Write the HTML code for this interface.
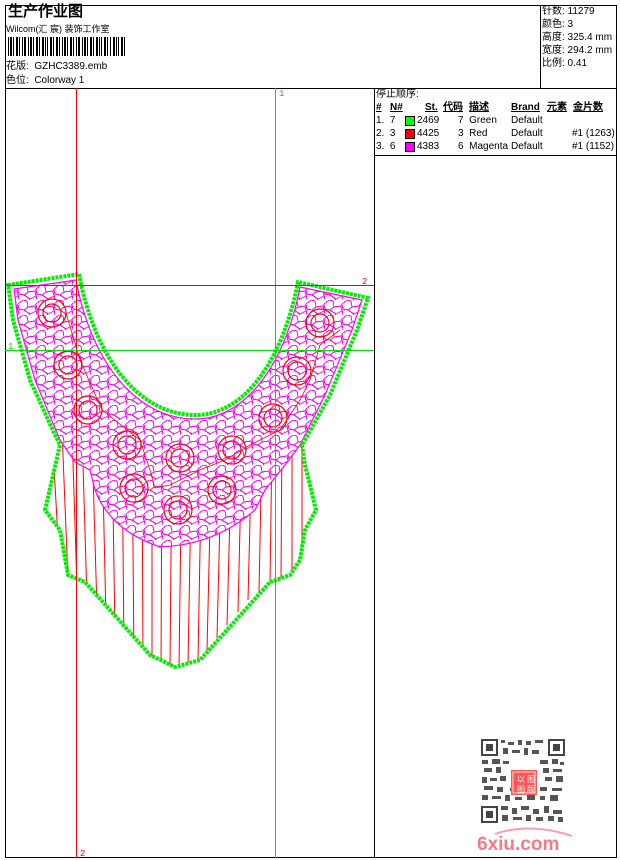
<!DOCTYPE html>
<html><head><meta charset="utf-8"><style>
*{margin:0;padding:0}
body{width:620px;height:860px;background:#fff;position:relative;overflow:hidden;font-family:"Liberation Sans","WenQuanYi Zen Hei",sans-serif;font-size:10px;color:#000}
.a{position:absolute;white-space:nowrap;line-height:12px}
.b{font-weight:bold;text-decoration:underline}
.l{position:absolute}
</style></head><body>
<svg width="620" height="860" style="position:absolute;left:0;top:0" xmlns="http://www.w3.org/2000/svg" shape-rendering="crispEdges">
<defs>
<pattern id="cells" width="18" height="15" patternUnits="userSpaceOnUse">
<path d="M0 4 L5 0 L9 1 L10 7 L6 10 L1 9 Z M10 7 L17 6 L18 11 L12 14 L6 10 M1 9 L0 15 M12 14 L11 15 M5 0 L5 -1 M17 6 L18 4" fill="none" stroke="#f0f" stroke-width="1"/>
</pattern>
<clipPath id="outer"><path d="M8 285 L79 274 C95 360 140 415 195 415 C250 415 285 350 298 282 L368 298 L357 330 L330 395 L302 445 L305 465 L316 510 L305 530 L300 560 L290 575 L270 582 L245 610 L200 660 L175 667 L150 655 L110 610 L85 582 L68 575 L60 530 L45 510 L60 445 L55 435 L30 380 L13 320 Z"/></clipPath>
</defs>
<rect x="5.5" y="5.5" width="611" height="852" fill="none" stroke="#000"/>
<line x1="5" y1="88.5" x2="617" y2="88.5" stroke="#000"/>
<line x1="540.5" y1="5" x2="540.5" y2="88" stroke="#000"/>
<line x1="374.5" y1="88" x2="374.5" y2="858" stroke="#000"/>
<line x1="374" y1="155.5" x2="617" y2="155.5" stroke="#000"/>
<g fill="#000">
<rect x="8" y="37" width="1" height="19"/><rect x="10" y="37" width="2" height="19"/><rect x="13" y="37" width="1" height="19"/><rect x="16" y="37" width="2" height="19"/><rect x="19" y="37" width="1" height="19"/><rect x="22" y="37" width="1" height="19"/><rect x="24" y="37" width="2" height="19"/><rect x="28" y="37" width="1" height="19"/><rect x="30" y="37" width="2" height="19"/><rect x="33" y="37" width="1" height="19"/><rect x="36" y="37" width="2" height="19"/><rect x="39" y="37" width="1" height="19"/><rect x="42" y="37" width="2" height="19"/><rect x="45" y="37" width="1" height="19"/><rect x="47" y="37" width="1" height="19"/><rect x="50" y="37" width="2" height="19"/><rect x="53" y="37" width="1" height="19"/><rect x="56" y="37" width="2" height="19"/><rect x="59" y="37" width="1" height="19"/><rect x="62" y="37" width="1" height="19"/><rect x="64" y="37" width="2" height="19"/><rect x="67" y="37" width="1" height="19"/><rect x="70" y="37" width="2" height="19"/><rect x="73" y="37" width="1" height="19"/><rect x="76" y="37" width="1" height="19"/><rect x="78" y="37" width="2" height="19"/><rect x="82" y="37" width="1" height="19"/><rect x="84" y="37" width="2" height="19"/><rect x="87" y="37" width="1" height="19"/><rect x="90" y="37" width="2" height="19"/><rect x="93" y="37" width="1" height="19"/><rect x="96" y="37" width="2" height="19"/><rect x="99" y="37" width="1" height="19"/><rect x="101" y="37" width="1" height="19"/><rect x="104" y="37" width="2" height="19"/><rect x="107" y="37" width="1" height="19"/><rect x="110" y="37" width="1" height="19"/><rect x="113" y="37" width="2" height="19"/><rect x="116" y="37" width="1" height="19"/><rect x="118" y="37" width="1" height="19"/><rect x="121" y="37" width="2" height="19"/><rect x="124" y="37" width="1" height="19"/>
</g>
<rect x="405.5" y="116.5" width="9" height="9" fill="#0f0" stroke="#000" stroke-width="1"/>
<rect x="405.5" y="129.5" width="9" height="9" fill="#f00" stroke="#000" stroke-width="1"/>
<rect x="405.5" y="142.5" width="9" height="9" fill="#f0f" stroke="#000" stroke-width="1"/>
<g clip-path="url(#outer)" stroke="#f00" stroke-width="1" shape-rendering="auto">
<path d="M52 430 L60 575 M62 430 L68 580 M72 430 L77 588 M82 430 L87 600 M92 440 L97 610 M102 440 L106 620 M112 440 L115 635 M122 440 L124 650 M132 440 L134 660 M142 440 L143 666 M152 440 L152 668 M162 440 L161 668 M172 440 L170 668 M182 440 L179 668 M192 440 L188 665 M202 440 L198 660 M212 440 L207 650 M222 440 L217 638 M232 440 L227 625 M242 440 L238 612 M252 440 L248 600 M262 440 L259 592 M272 440 L270 585 M282 430 L281 580 M292 430 L292 575 M302 430 L302 565"/>
</g>
<path d="M14 289 L76 280 C92 365 138 419 195 419 C252 419 288 352 300 287 L362 300 L352 330 L325 395 L300 445 L285 465 L265 490 L255 510 Q215 545 160 547 Q110 530 95 490 L90 470 L75 462 L60 440 L35 380 L18 320 Z" fill="#fff" stroke="#f0f" stroke-width="1.2" shape-rendering="auto"/>
<path d="M14 289 L76 280 C92 365 138 419 195 419 C252 419 288 352 300 287 L362 300 L352 330 L325 395 L300 445 L285 465 L265 490 L255 510 Q215 545 160 547 Q110 530 95 490 L90 470 L75 462 L60 440 L35 380 L18 320 Z" fill="url(#cells)"/>
<path d="M8 285 L79 274 C95 360 140 415 195 415 C250 415 285 350 298 282 L368 298 L357 330 L330 395 L302 445 L305 465 L316 510 L305 530 L300 560 L290 575 L270 582 L245 610 L200 660 L175 667 L150 655 L110 610 L85 582 L68 575 L60 530 L45 510 L60 445 L55 435 L30 380 L13 320 Z" fill="none" stroke="#0e0" stroke-width="4" stroke-dasharray="3 1" shape-rendering="auto"/>
<g fill="none" stroke="#f00" stroke-width="1.2" shape-rendering="auto">
<circle cx="52" cy="313" r="14"/><circle cx="52" cy="313" r="9"/>
<circle cx="68" cy="365" r="14"/><circle cx="68" cy="365" r="9"/>
<circle cx="88" cy="410" r="14"/><circle cx="88" cy="410" r="9"/>
<circle cx="127" cy="445" r="14"/><circle cx="127" cy="445" r="9"/>
<circle cx="180" cy="458" r="14"/><circle cx="180" cy="458" r="9"/>
<circle cx="232" cy="450" r="14"/><circle cx="232" cy="450" r="9"/>
<circle cx="273" cy="418" r="14"/><circle cx="273" cy="418" r="9"/>
<circle cx="297" cy="371" r="14"/><circle cx="297" cy="371" r="9"/>
<circle cx="320" cy="323" r="14"/><circle cx="320" cy="323" r="9"/>
<circle cx="134" cy="488" r="14"/><circle cx="134" cy="488" r="9"/>
<circle cx="178" cy="510" r="14"/><circle cx="178" cy="510" r="9"/>
<circle cx="222" cy="490" r="14"/><circle cx="222" cy="490" r="9"/>
</g>
<g fill="none" stroke="#f00" stroke-width="0.8" shape-rendering="auto">
<path d="M66 313 L80 360 L102 410 L140 440 L150 470 L155 488 L170 485 L200 470 L225 460 L250 445 L280 430 L300 400 L310 380 L320 345 L340 330"/>
</g>
<text x="279" y="96" fill="#0c0" font-size="9" font-family="Liberation Mono">1</text>
<text x="362" y="284" fill="#e00" font-size="9" font-family="Liberation Mono">2</text>
<text x="8" y="349" fill="#0c0" font-size="9" font-family="Liberation Mono">1</text>
<text x="80" y="856" fill="#e00" font-size="9" font-family="Liberation Mono">2</text>
<g fill="#444">
<rect x="481" y="739" width="17" height="17"/><rect x="548" y="739" width="17" height="17"/><rect x="481" y="806" width="17" height="17"/>
</g>
<g fill="#fff"><rect x="483" y="741" width="13" height="13"/><rect x="550" y="741" width="13" height="13"/><rect x="483" y="808" width="13" height="13"/></g>
<g fill="#444"><rect x="486" y="744" width="7" height="7"/><rect x="553" y="744" width="7" height="7"/><rect x="486" y="811" width="7" height="7"/></g>
<g fill="#555">
<rect x="501" y="740" width="4" height="3"/><rect x="508" y="742" width="6" height="3"/><rect x="518" y="740" width="4" height="5"/><rect x="526" y="741" width="5" height="4"/><rect x="535" y="740" width="8" height="3"/>
<rect x="503" y="748" width="5" height="6"/><rect x="512" y="750" width="8" height="3"/><rect x="524" y="748" width="4" height="7"/><rect x="532" y="750" width="7" height="4"/>
<rect x="482" y="760" width="6" height="4"/><rect x="492" y="759" width="8" height="5"/><rect x="503" y="761" width="6" height="3"/><rect x="540" y="760" width="8" height="4"/><rect x="552" y="759" width="6" height="5"/><rect x="560" y="762" width="4" height="3"/>
<rect x="484" y="768" width="8" height="4"/><rect x="496" y="767" width="5" height="6"/><rect x="543" y="768" width="6" height="5"/><rect x="553" y="769" width="9" height="3"/>
<rect x="482" y="777" width="5" height="6"/><rect x="490" y="778" width="7" height="3"/><rect x="500" y="776" width="6" height="5"/><rect x="545" y="777" width="7" height="4"/><rect x="556" y="776" width="7" height="6"/>
<rect x="484" y="786" width="9" height="4"/><rect x="497" y="787" width="6" height="5"/><rect x="510" y="788" width="8" height="3"/><rect x="522" y="786" width="6" height="6"/><rect x="540" y="787" width="7" height="4"/><rect x="552" y="788" width="10" height="3"/>
<rect x="482" y="795" width="6" height="5"/><rect x="492" y="796" width="9" height="3"/><rect x="505" y="795" width="5" height="6"/><rect x="515" y="797" width="7" height="3"/><rect x="527" y="795" width="8" height="5"/><rect x="540" y="796" width="5" height="4"/><rect x="550" y="795" width="8" height="6"/>
<rect x="501" y="806" width="7" height="4"/><rect x="512" y="808" width="5" height="6"/><rect x="521" y="806" width="8" height="4"/><rect x="533" y="809" width="6" height="5"/><rect x="544" y="806" width="5" height="7"/><rect x="553" y="810" width="9" height="4"/>
<rect x="502" y="815" width="6" height="6"/><rect x="513" y="817" width="9" height="3"/><rect x="526" y="815" width="5" height="6"/><rect x="536" y="817" width="7" height="4"/><rect x="548" y="816" width="6" height="5"/><rect x="558" y="817" width="5" height="5"/>
</g>
<rect x="511" y="770" width="26" height="25" fill="#f55"/>
<rect x="513" y="772" width="22" height="21" fill="none" stroke="#fdd" stroke-width="1"/>
<text x="517" y="782" font-size="8" fill="#fff" font-family="WenQuanYi Zen Hei">以 图</text>
<text x="517" y="792" font-size="8" fill="#fff" font-family="WenQuanYi Zen Hei">图 版</text>
<path d="M495 834 Q530 822 572 836" fill="none" stroke="#f8a0a8" stroke-width="2" shape-rendering="auto"/>
<text x="477" y="850" font-size="19" font-weight="bold" fill="#f47b85" font-family="Liberation Sans">6xiu.com</text>
</svg>
<div class="l" style="left:76px;top:88px;width:1px;height:770px;background:#f00"></div>
<div class="l" style="left:275px;top:88px;width:1px;height:770px;background:#00e000"></div>
<div class="l" style="left:5px;top:285px;width:369px;height:1px;background:#f00"></div>
<div class="l" style="left:5px;top:350px;width:369px;height:1px;background:#00e000"></div>
<div class="a" style="left:8px;top:4px;font-size:15px;font-weight:bold;line-height:16px">生产作业图</div>
<div class="a" style="left:6px;top:23px;font-size:9px">Wilcom(汇 宸) 装饰工作室</div>
<div class="a" style="left:6px;top:61px">花版:&nbsp; GZHC3389.emb</div>
<div class="a" style="left:6px;top:75px">色位:&nbsp; Colorway 1</div>
<div class="a" style="left:542px;top:6px">针数: 11279</div>
<div class="a" style="left:542px;top:19px">颜色: 3</div>
<div class="a" style="left:542px;top:32px">高度: 325.4 mm</div>
<div class="a" style="left:542px;top:45px">宽度: 294.2 mm</div>
<div class="a" style="left:542px;top:58px">比例: 0.41</div>
<div class="a" style="left:376px;top:89px">停止顺序:</div>
<div class="a b" style="left:376px;top:102px">#</div>
<div class="a b" style="left:390px;top:102px">N#</div>
<div class="a b" style="left:425px;top:102px">St.</div>
<div class="a b" style="left:443px;top:102px">代码</div>
<div class="a b" style="left:469px;top:102px">描述</div>
<div class="a b" style="left:511px;top:102px">Brand</div>
<div class="a b" style="left:547px;top:102px">元素</div>
<div class="a b" style="left:573px;top:102px">金片数</div>
<div class="a" style="left:376px;top:115px">1.&nbsp; 7</div><div class="a" style="left:417px;top:115px">2469</div><div class="a" style="left:458px;top:115px">7&nbsp; Green</div><div class="a" style="left:511px;top:115px">Default</div>
<div class="a" style="left:376px;top:128px">2.&nbsp; 3</div><div class="a" style="left:417px;top:128px">4425</div><div class="a" style="left:458px;top:128px">3&nbsp; Red</div><div class="a" style="left:511px;top:128px">Default</div><div class="a" style="left:572px;top:128px">#1 (1263)</div>
<div class="a" style="left:376px;top:141px">3.&nbsp; 6</div><div class="a" style="left:417px;top:141px">4383</div><div class="a" style="left:458px;top:141px">6&nbsp; Magenta</div><div class="a" style="left:511px;top:141px">Default</div><div class="a" style="left:572px;top:141px">#1 (1152)</div>
</body></html>
